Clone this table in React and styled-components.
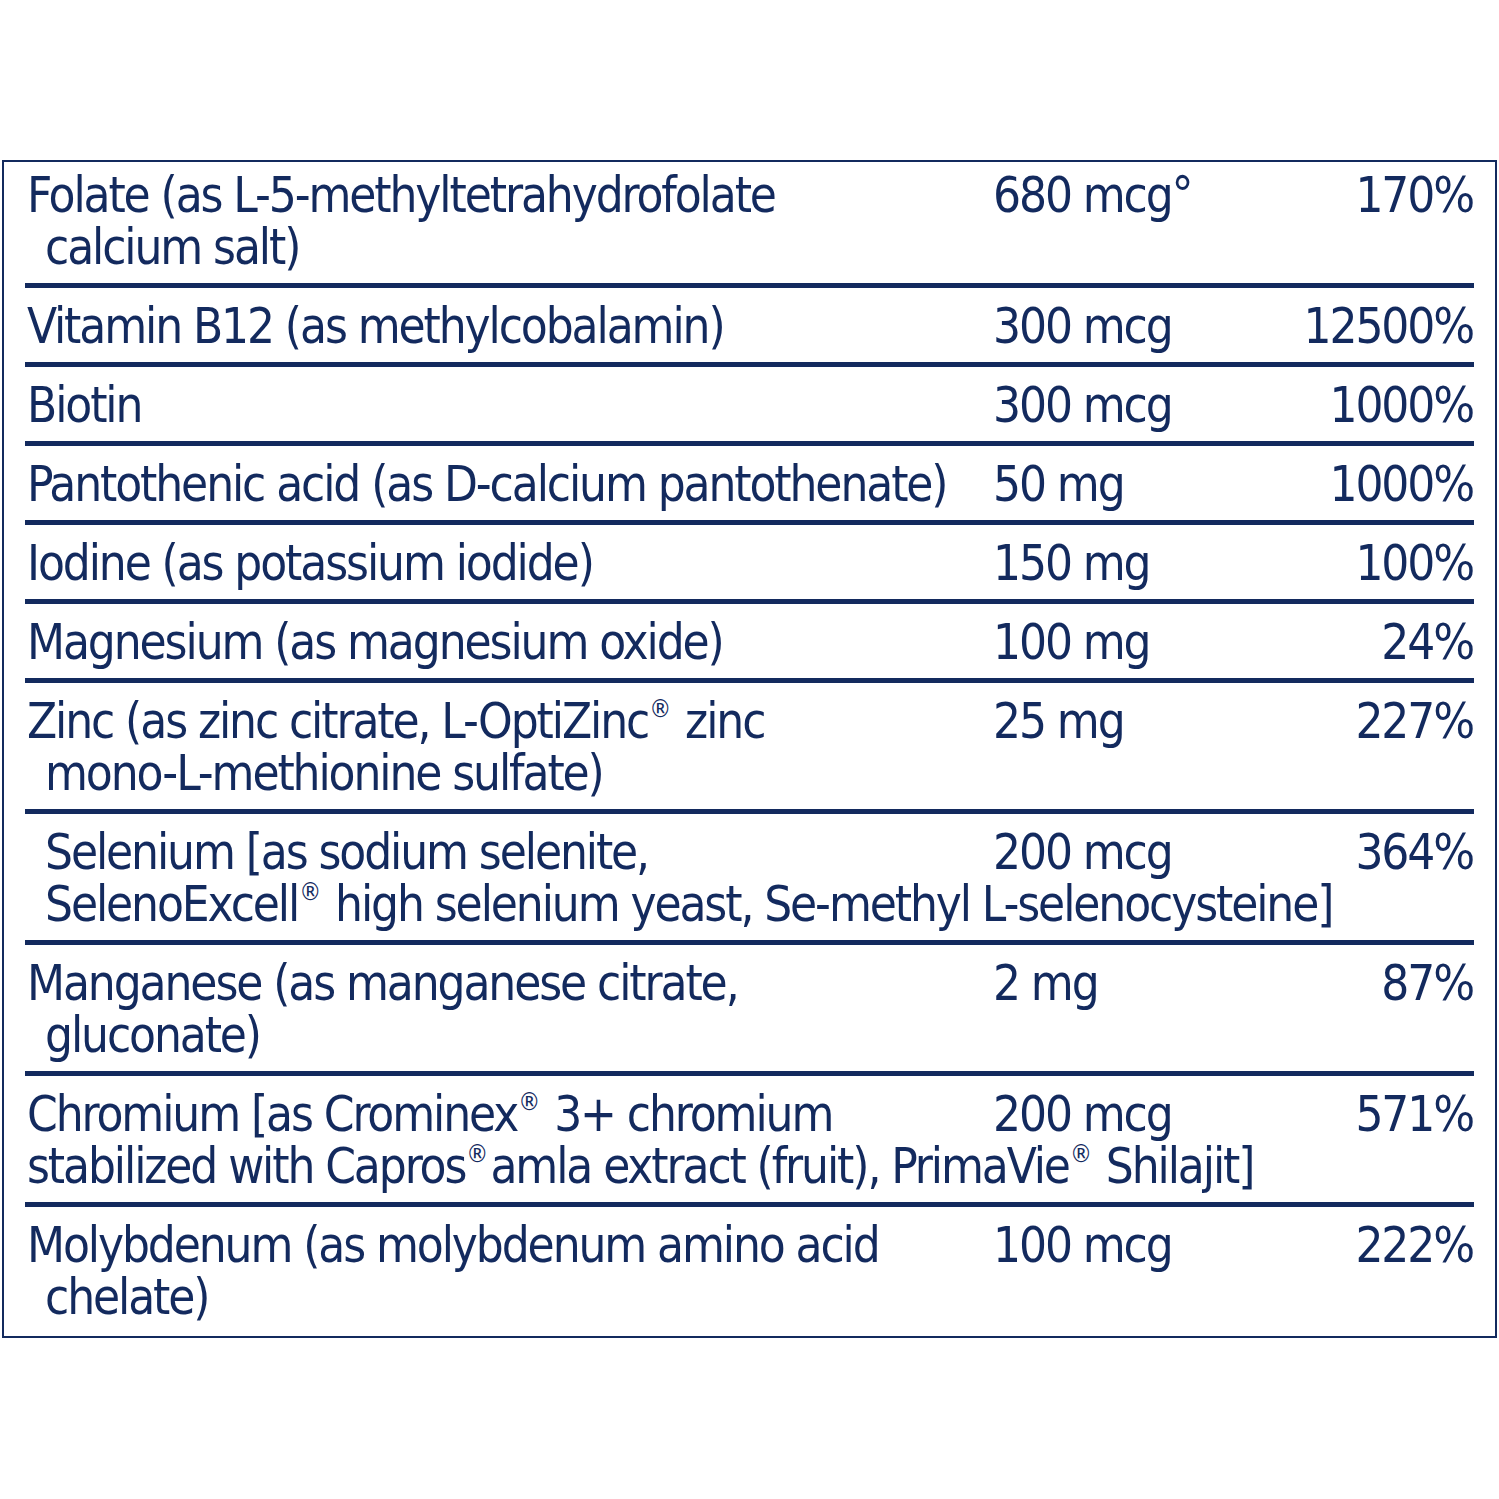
import React from 'react';
import styled, { createGlobalStyle } from 'styled-components';

const NAVY = '#132a5e';

const GlobalStyle = createGlobalStyle`
  html, body {
    margin: 0;
    padding: 0;
    background: #ffffff;
  }
`;

const Page = styled.div`
  padding: 160px 0 0 2px;
  width: 1495px;
`;

const Panel = styled.div`
  border: 2px solid ${NAVY};
  padding: 0 21px 0 21px;
  font-family: "Liberation Sans Narrow", "DejaVu Sans Condensed", "Liberation Sans", sans-serif;
  font-stretch: condensed;
  font-size: 49px;
  letter-spacing: -2.1px;
  line-height: 52px;
  color: ${NAVY};
`;

const Row = styled.div`
  display: grid;
  grid-template-columns: 966px 1fr auto;
  padding: ${p => (p.$first ? '8px' : '13px')} 0 ${p => (p.$last ? '12px' : '9px')} 2px;
  border-bottom: ${p => (p.$last ? 'none' : `5px solid ${NAVY}`)};
`;

const Name = styled.div`
  white-space: nowrap;
  overflow: visible;
`;

const Line = styled.div`
  padding-left: ${p => (p.$indent ? '18px' : '0')};
`;

const Amount = styled.div`
  white-space: nowrap;
`;

const Percent = styled.div`
  text-align: right;
  white-space: nowrap;
  margin-right: 1px;
`;

const Reg = styled.sup`
  font-size: 0.5em;
  letter-spacing: 0;
  line-height: 0;
  vertical-align: 0.85em;
  margin: 0 2px 0 1px;
`;

const rows = [
  {
    lines: [
      { text: 'Folate (as L-5-methyltetrahydrofolate' },
      { text: 'calcium salt)', indent: true },
    ],
    amount: '680 mcg°',
    dv: '170%',
  },
  { lines: [{ text: 'Vitamin B12 (as methylcobalamin)' }], amount: '300 mcg', dv: '12500%' },
  { lines: [{ text: 'Biotin' }], amount: '300 mcg', dv: '1000%' },
  { lines: [{ text: 'Pantothenic acid (as D-calcium pantothenate)' }], amount: '50 mg', dv: '1000%' },
  { lines: [{ text: 'Iodine (as potassium iodide)' }], amount: '150 mg', dv: '100%' },
  { lines: [{ text: 'Magnesium (as magnesium oxide)' }], amount: '100 mg', dv: '24%' },
  {
    lines: [
      { text: <>Zinc (as zinc citrate, L-OptiZinc<Reg>®</Reg> zinc</> },
      { text: 'mono-L-methionine sulfate)', indent: true },
    ],
    amount: '25 mg',
    dv: '227%',
  },
  {
    lines: [
      { text: 'Selenium [as sodium selenite,', indent: true },
      { text: <>SelenoExcell<Reg>®</Reg> high selenium yeast, Se-methyl L-selenocysteine]</>, indent: true },
    ],
    amount: '200 mcg',
    dv: '364%',
  },
  {
    lines: [
      { text: 'Manganese (as manganese citrate,' },
      { text: 'gluconate)', indent: true },
    ],
    amount: '2 mg',
    dv: '87%',
  },
  {
    lines: [
      { text: <>Chromium [as Crominex<Reg>®</Reg> 3+ chromium</> },
      { text: <>stabilized with Capros<Reg>®</Reg>amla extract (fruit), PrimaVie<Reg>®</Reg> Shilajit]</> },
    ],
    amount: '200 mcg',
    dv: '571%',
  },
  {
    lines: [
      { text: 'Molybdenum (as molybdenum amino acid' },
      { text: 'chelate)', indent: true },
    ],
    amount: '100 mcg',
    dv: '222%',
  },
];

const App = () => {
  return (
    <Page>
      <GlobalStyle />
      <Panel>
        {rows.map((row, i) => (
          <Row key={i} $first={i === 0} $last={i === rows.length - 1}>
            <Name>
              {row.lines.map((line, j) => (
                <Line key={j} $indent={line.indent}>{line.text}</Line>
              ))}
            </Name>
            <Amount>{row.amount}</Amount>
            <Percent>{row.dv}</Percent>
          </Row>
        ))}
      </Panel>
    </Page>
  );
};

export default App;
